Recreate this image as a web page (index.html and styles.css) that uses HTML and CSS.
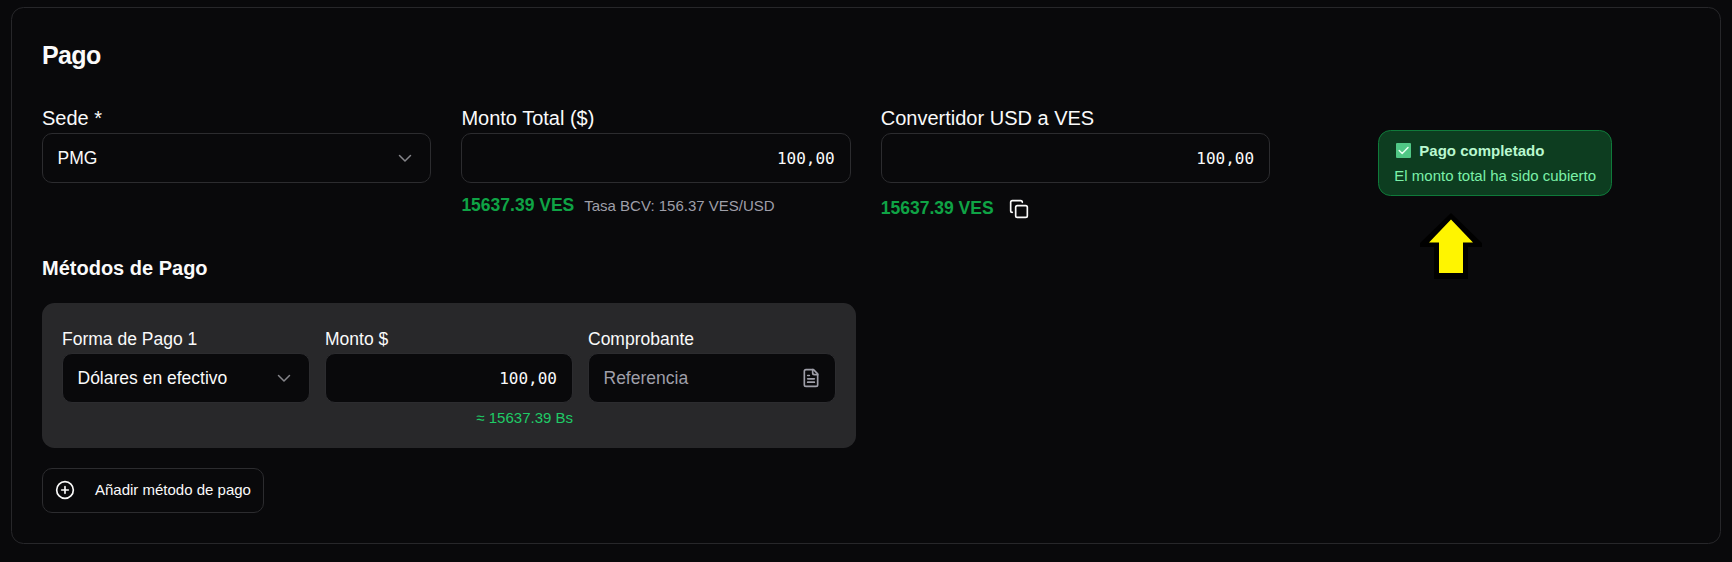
FILE: index.html
```html
<!DOCTYPE html>
<html lang="es">
<head>
<meta charset="utf-8">
<title>Pago</title>
<link rel="stylesheet" href="styles.css">
</head>
<body>
<section class="card">
  <h1 class="title">Pago</h1>
  <div class="grid">
    <div class="field">
      <label class="label">Sede *</label>
      <div class="control select"><span>PMG</span>
        <svg class="chevron" viewBox="0 0 20 20"><path d="M4.500 7.500 10 13l5.500-5.500"/></svg>
      </div>
    </div>
    <div class="field">
      <label class="label">Monto Total ($)</label>
      <div class="control amount">100,00</div>
      <div class="rate"><span class="ves">15637.39 VES</span><span class="bcv">Tasa BCV: 156.37 VES/USD</span></div>
    </div>
    <div class="field">
      <label class="label">Convertidor USD a VES</label>
      <div class="control amount">100,00</div>
      <div class="rate converted"><span class="ves">15637.39 VES</span>
        <svg class="copy" viewBox="0 0 24 24"><rect x="8" y="8" width="14" height="14" rx="2"/><path d="M4 16c-1.100 0-2-.9-2-2V4c0-1.100.9-2 2-2h10c1.100 0 2 .9 2 2"/></svg>
      </div>
    </div>
    <div class="status">
      <div class="alert">
        <div class="alert-title">
          <svg class="check" viewBox="0 0 15 15"><rect width="15" height="15" rx="1"/><path d="M3.200 7.500 6.200 10.500 12 4.500"/></svg>
          <span>Pago completado</span>
        </div>
        <div class="alert-text">El monto total ha sido cubierto</div>
      </div>
    </div>
  </div>
  <h2 class="subtitle">Métodos de Pago</h2>
  <div class="method">
    <div class="field">
      <label class="label small">Forma de Pago 1</label>
      <div class="control select"><span>Dólares en efectivo</span>
        <svg class="chevron" viewBox="0 0 20 20"><path d="M4.500 7.500 10 13l5.500-5.500"/></svg>
      </div>
    </div>
    <div class="field">
      <label class="label small">Monto $</label>
      <div class="control amount">100,00</div>
      <div class="approx">≈ 15637.39 Bs</div>
    </div>
    <div class="field">
      <label class="label small">Comprobante</label>
      <div class="control select"><span class="placeholder">Referencia</span>
        <svg class="doc" viewBox="0 0 24 24"><path d="M15 2H6a2 2 0 0 0-2 2v16a2 2 0 0 0 2 2h12a2 2 0 0 0 2-2V7Z"/><path d="M14 2v4a2 2 0 0 0 2 2h4M10 9H8M16 13H8M16 17H8"/></svg>
      </div>
    </div>
  </div>
  <button class="add">
    <svg class="plus" viewBox="0 0 24 24"><circle cx="12" cy="12" r="10"/><path d="M8 12h8M12 8v8"/></svg>
    <span>Añadir método de pago</span>
  </button>
</section>
<svg class="arrow" viewBox="0 0 62 66"><path class="arrow-edge" d="M31 0 62 30v4H48v32H14V34H0v-4Z"/><path class="arrow-fill" d="M31 6.500 53 29.500H43V60H19V29.500H9Z"/></svg>
</body>
</html>
```
FILE: styles.css
```css
* { box-sizing: border-box; }
body {
  margin: 0;
  height: 562px;
  padding: 7px 11px 0;
  background: #09090b;
  color: #fafafa;
  font-family: "Liberation Sans", Arial, sans-serif;
  font-size: 17.5px;
  overflow: hidden;
}
svg { display: block; flex: none; fill: none; stroke: currentColor; stroke-width: 2; stroke-linecap: round; stroke-linejoin: round; }
.card {
  width: 1710px;
  height: 537px;
  padding: 30px 30.5px 30px 30px;
  border: 1px solid #27272a;
  border-radius: 12.500px;
}
.title { margin: 5px 0 0; font-size: 25px; line-height: 25px; letter-spacing: -0.025em; }
.grid { display: grid; grid-template-columns: repeat(4, 1fr); column-gap: 30px; margin-top: 35px; height: 125px; }
.field { min-width: 0; }
.label { display: block; height: 30px; line-height: 30px; font-size: 20px; }
.control {
  display: flex;
  align-items: center;
  height: 50px;
  padding: 0 15px 0 14.5px;
  border: 1px solid #2c2c2f;
  border-radius: 10px;
  background: #09090b;
}
.select { justify-content: space-between; }
.amount { justify-content: flex-end; font-family: "DejaVu Sans Mono", monospace; font-size: 16px; }
.chevron { width: 20px; height: 20px; color: #85858a; stroke-width: 1.500; }
.rate { display: flex; align-items: center; gap: 10px; height: 25px; margin-top: 10px; }
.converted { gap: 15px; margin-top: 13px; }
.ves { color: #0fa345; font-weight: 700; }
.bcv { color: #9f9fa9; font-size: 15px; }
.copy { width: 20px; height: 20px; }
.status { display: flex; justify-content: center; align-items: flex-start; padding-top: 27px; }
.alert {
  width: 234px;
  height: 66px;
  padding: 7px 15px;
  margin-left: 1px;
  border: 1px solid #0f7a3a;
  border-radius: 12.500px;
  background: #0d3d20;
  font-size: 15px;
  white-space: nowrap;
}
.alert-title { display: flex; align-items: center; gap: 8px; height: 25px; padding-left: 2px; color: #b9f8cf; font-weight: 700; }
.alert-text { line-height: 25px; color: #7bf1a8; }
.check { width: 15px; height: 15px; color: #e6fff0; stroke-width: 1.500; }
.check rect { fill: #50c785; stroke: none; }
.subtitle { margin: 28px 0 0; font-size: 20px; line-height: 25px; }
.method {
  display: grid;
  grid-template-columns: repeat(3, 1fr);
  gap: 15px;
  width: 814px;
  height: 145px;
  margin-top: 22px;
  padding: 20px;
  border-radius: 12.500px;
  background: #28282a;
}
.small { font-size: 17.500px; line-height: 32px; }
.placeholder { color: #9f9fa9; }
.doc { width: 20px; height: 20px; margin-right: -1px; color: #9f9fa9; }
.approx { margin-top: 5px; line-height: 20px; font-size: 15px; text-align: right; color: #1fcb66; }
.add {
  display: flex;
  align-items: center;
  gap: 20px;
  width: 222px;
  height: 45px;
  margin-top: 20px;
  padding: 0 12px 2px;
  border: 1px solid #2c2c2f;
  border-radius: 10px;
  background: #09090b;
  color: #fafafa;
  font: 15px "Liberation Sans", Arial, sans-serif;
  white-space: nowrap;
}
.plus { width: 20px; height: 20px; }
.arrow { position: absolute; left: 1420px; top: 213px; width: 62px; height: 66px; stroke: none; }
.arrow-edge { fill: #000; }
.arrow-fill { fill: #fff500; }
```
